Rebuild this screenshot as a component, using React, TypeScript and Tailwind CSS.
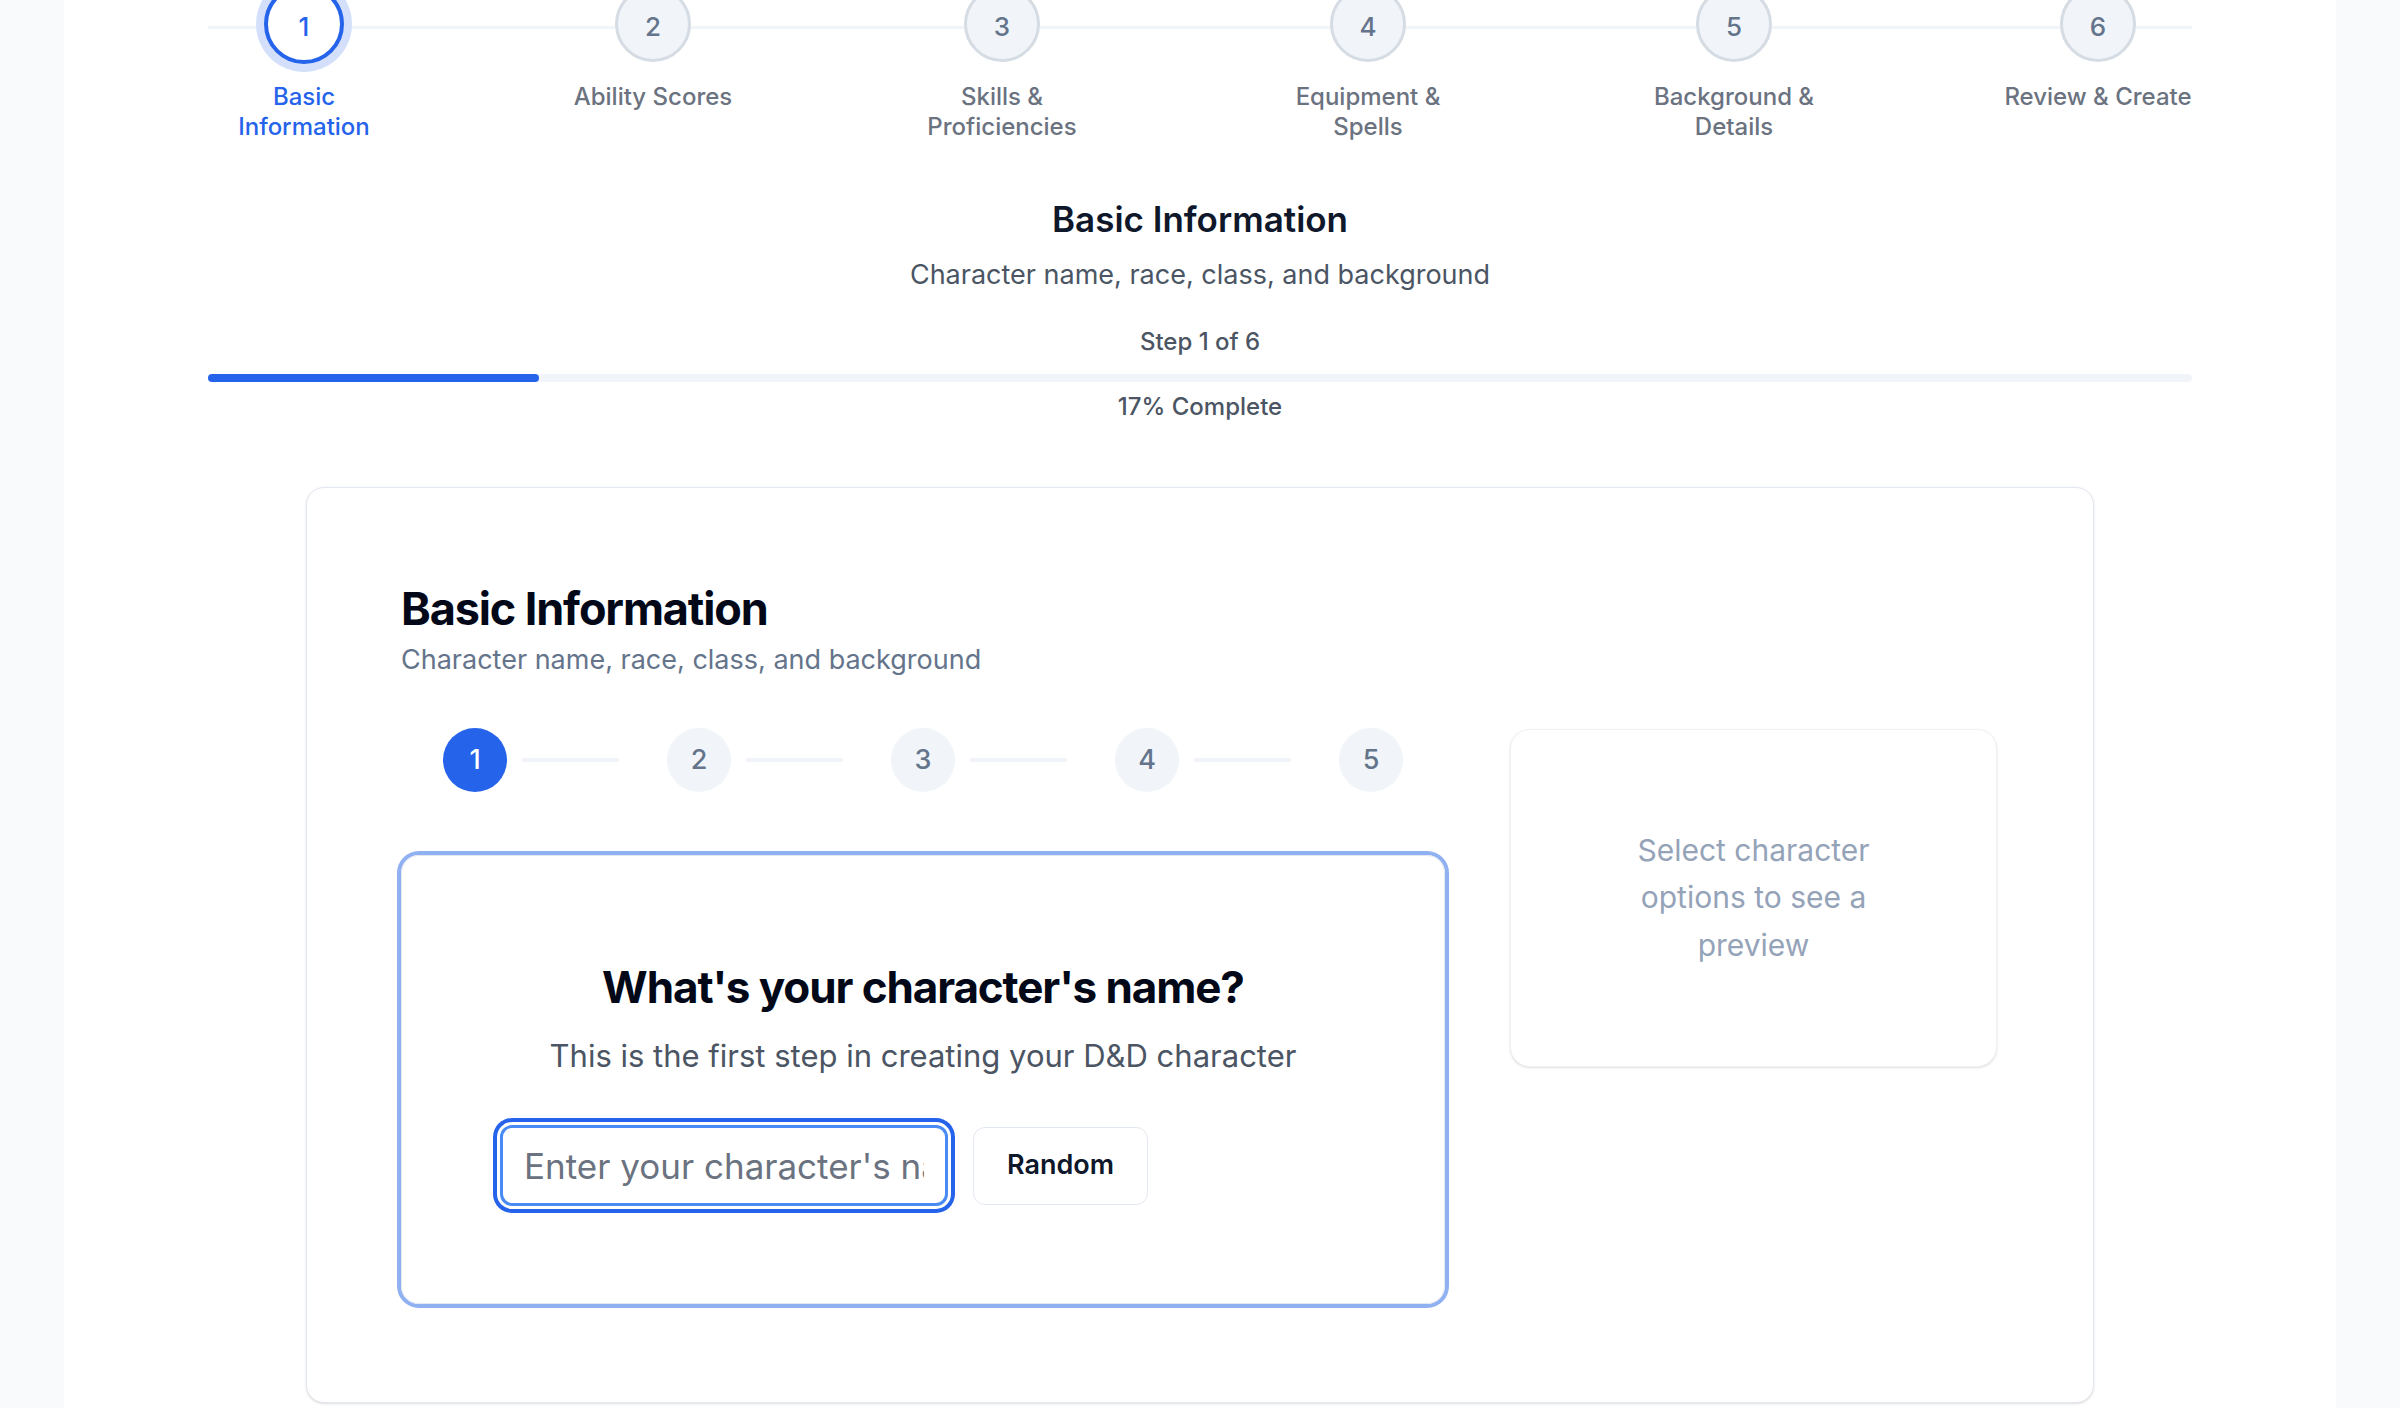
const steps = [
  { n: 1, lines: ["Basic", "Information"], width: "w-[192px]", active: true },
  { n: 2, lines: ["Ability Scores"], width: "w-[158px]", active: false },
  { n: 3, lines: ["Skills &", "Proficiencies"], width: "w-[192px]", active: false },
  { n: 4, lines: ["Equipment &", "Spells"], width: "w-[192px]", active: false },
  { n: 5, lines: ["Background &", "Details"], width: "w-[192px]", active: false },
  { n: 6, lines: ["Review & Create"], width: "w-[188px]", active: false },
];

function TopStepper() {
  return (
    <div className="relative -mt-[16px]">
      {/* track behind the circles */}
      <div className="absolute left-0 right-0 top-[42px] h-[3px] bg-[#f1f5f9]" />
      <div className="relative flex justify-between">
        {steps.map((s) => (
          <div key={s.n} className={`${s.width} flex flex-col items-center`}>
            <div className="flex h-[80px] items-center justify-center">
              {s.active ? (
                <div className="flex h-[80px] w-[80px] items-center justify-center rounded-full border-[4px] border-[#2563eb] bg-white pt-[4px] text-[26px] font-medium text-[#2563eb] ring-[8px] ring-[#d4e0fb]">
                  {s.n}
                </div>
              ) : (
                <div className="flex h-[76px] w-[76px] items-center justify-center rounded-full border-[3px] border-[#d5dce4] bg-[#f1f5f9] pt-[4px] text-[26px] font-medium text-[#64748b]">
                  {s.n}
                </div>
              )}
            </div>
            <div
              className={
                s.active
                  ? "mt-[18px] whitespace-nowrap text-center text-[24px] font-medium leading-[30px] text-[#2563eb]"
                  : "mt-[18px] whitespace-nowrap text-center text-[24px] font-medium leading-[30px] text-[#6b7280]"
              }
            >
              {s.lines.map((l) => (
                <div key={l}>{l}</div>
              ))}
            </div>
          </div>
        ))}
      </div>
    </div>
  );
}

function MiniStepper() {
  return (
    <div className="flex items-center justify-center">
      {[1, 2, 3, 4, 5].map((n) => (
        <div key={n} className="flex items-center">
          {n === 1 ? (
            <div className="flex h-[64px] w-[64px] items-center justify-center rounded-full bg-[#2563eb] text-[27px] font-medium text-white">
              {n}
            </div>
          ) : (
            <div className="flex h-[64px] w-[64px] items-center justify-center rounded-full bg-[#f1f5f9] text-[27px] font-medium text-[#64748b]">
              {n}
            </div>
          )}
          {n < 5 && <div className="ml-[15px] mr-[48px] h-[4px] w-[97px] bg-[#f1f5f9]" />}
        </div>
      ))}
    </div>
  );
}

export default function App() {
  return (
    <div className="min-h-screen bg-[#f8fafc] font-[Inter,sans-serif]">
      <div className="mx-auto flex min-h-screen w-[2272px] flex-col bg-white px-[144px] pb-[120px]">
        <TopStepper />

        <div className="mt-[53px] text-center">
          <h2 className="text-[35px] font-semibold leading-[48px] text-[#0f172a]">Basic Information</h2>
          <p className="mt-[11px] text-[27px] leading-[42px] text-[#4b5563]">
            Character name, race, class, and background
          </p>
        </div>

        <div className="mt-[31px] text-center text-[24px] font-medium leading-[30px] text-[#4b5563]">Step 1 of 6</div>
        <div className="mt-[17px] h-[8px] w-full rounded-full bg-[#f1f5f9]">
          <div className="h-full w-[16.67%] rounded-full bg-[#2563eb]" />
        </div>
        <div className="mt-[10px] text-center text-[24px] font-medium leading-[30px] text-[#4b5563]">17% Complete</div>

        <div className="mx-auto mt-[65px] w-[1788px] rounded-[18px] border border-[#e2e8f0] bg-white pb-[98px] pl-[94px] pr-[96px] pt-[94px] shadow-sm">
          <h1 className="text-[45px] font-bold leading-[54px] tracking-tight text-[#020817]">Basic Information</h1>
          <p className="mt-[3px] text-[27px] leading-[42px] text-[#64748b]">
            Character name, race, class, and background
          </p>

          <div className="mt-[47px] flex items-start gap-[65px]">
            <div className="w-[1044px]">
              <MiniStepper />

              <div className="mt-[63px] rounded-[18px] border-[1.5px] border-[#e2e8f0] pb-[97px] pt-[104px] text-center ring-[4px] ring-[#8fb0f1]">
                <h3 className="text-[44px] font-bold leading-[54px] tracking-tight text-[#020817]">
                  What's your character's name?
                </h3>
                <p className="mt-[21px] text-[31px] leading-[42px] text-[#4b5563]">
                  This is the first step in creating your D&amp;D character
                </p>
                <div className="mx-auto mt-[48px] flex w-[846px] items-center gap-[25px]">
                  <input
                    type="text"
                    placeholder="Enter your character's name"
                    className="h-[81px] w-[448px] rounded-[12px] border-[3px] border-[#4a8af4] bg-white px-[21px] text-[35px] text-[#0f172a] outline-none ring-[4px] ring-[#2563eb] ring-offset-[3px] ring-offset-white placeholder:text-[#6b7280]"
                  />
                  <button className="h-[78px] rounded-[12px] border-[1.5px] border-[#e2e8f0] bg-white px-[33px] text-[27px] font-semibold text-[#0f172a]">
                    Random
                  </button>
                </div>
              </div>
            </div>

            <div className="mt-[1px] flex h-[338px] w-[487px] items-center justify-center rounded-[20px] border-[1.5px] border-[#eef2f7] bg-white shadow-sm">
              <p className="max-w-[300px] text-center text-[30px] leading-[47.5px] text-[#94a3b8]">
                Select character options to see a preview
              </p>
            </div>
          </div>
        </div>
      </div>
    </div>
  );
}
